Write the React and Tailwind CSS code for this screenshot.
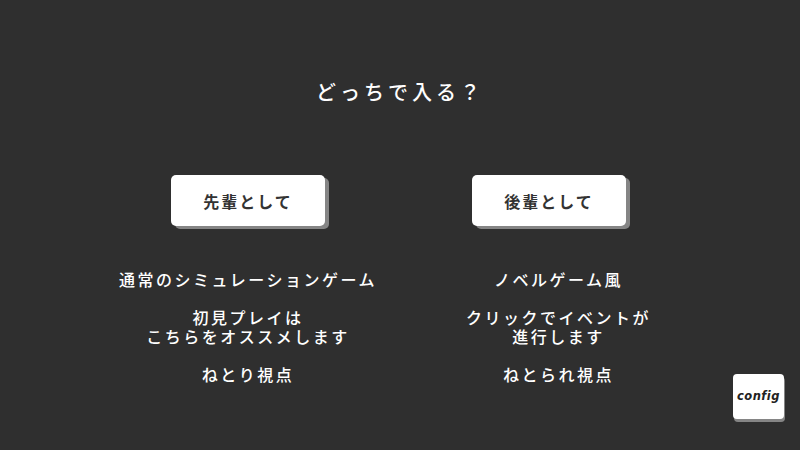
const jp = { fontFamily: '"Noto Sans CJK JP", "Noto Sans", sans-serif' };

function ChoiceButton({ label }) {
  return (
    <button
      className="w-[154px] h-[51px] rounded-[5px] bg-white text-[#333] text-[16px] font-bold tracking-[2px] shadow-[4px_3px_0_#858585] flex items-center justify-center"
      style={jp}
    >
      {label}
    </button>
  );
}

function Column({ label, blocks, textClass }) {
  return (
    <div className="w-[301px] flex flex-col items-center">
      <ChoiceButton label={label} />
      <div className={textClass}>
        {blocks.map((lines, i) => (
          <div key={i}>
            {lines.map((l, j) => (
              <div key={j}>{l}</div>
            ))}
          </div>
        ))}
      </div>
    </div>
  );
}

export default function App() {
  return (
    <div className="relative w-[800px] h-[450px] bg-[#2f2f2f] overflow-hidden flex flex-col items-center" style={jp}>
      <h1 className="mt-[78px] text-white text-[20px] leading-[28px] font-medium tracking-[4px]">どっちで入る？</h1>

      <div className="mt-[69px] flex justify-center pr-[3px]">
        <Column
          label="先輩として"
          textClass="mt-[44px] flex flex-col items-center gap-[19px] text-white text-[16px] leading-[19px] font-medium tracking-[2.5px] text-center"
          blocks={[
            ['通常のシミュレーションゲーム'],
            ['初見プレイは', 'こちらをオススメします'],
            ['ねとり視点'],
          ]}
        />
        <Column
          label="後輩として"
          textClass="mt-[44px] pl-[19px] flex flex-col items-center gap-[19px] text-white text-[16px] leading-[19px] font-medium tracking-[2.5px] text-center"
          blocks={[
            ['ノベルゲーム風'],
            ['クリックでイベントが', '進行します'],
            ['ねとられ視点'],
          ]}
        />
      </div>

      {/* settings shortcut */}
      <button className="absolute left-[733px] top-[374px] w-[51px] h-[45px] rounded-[4px] bg-white shadow-[1px_3px_0_#858585] flex items-center justify-center">
        <span className="text-[11.5px] font-bold italic text-[#222] tracking-[0.5px]" style={{ fontFamily: '"DejaVu Sans", sans-serif' }}>
          config
        </span>
      </button>
    </div>
  );
}
